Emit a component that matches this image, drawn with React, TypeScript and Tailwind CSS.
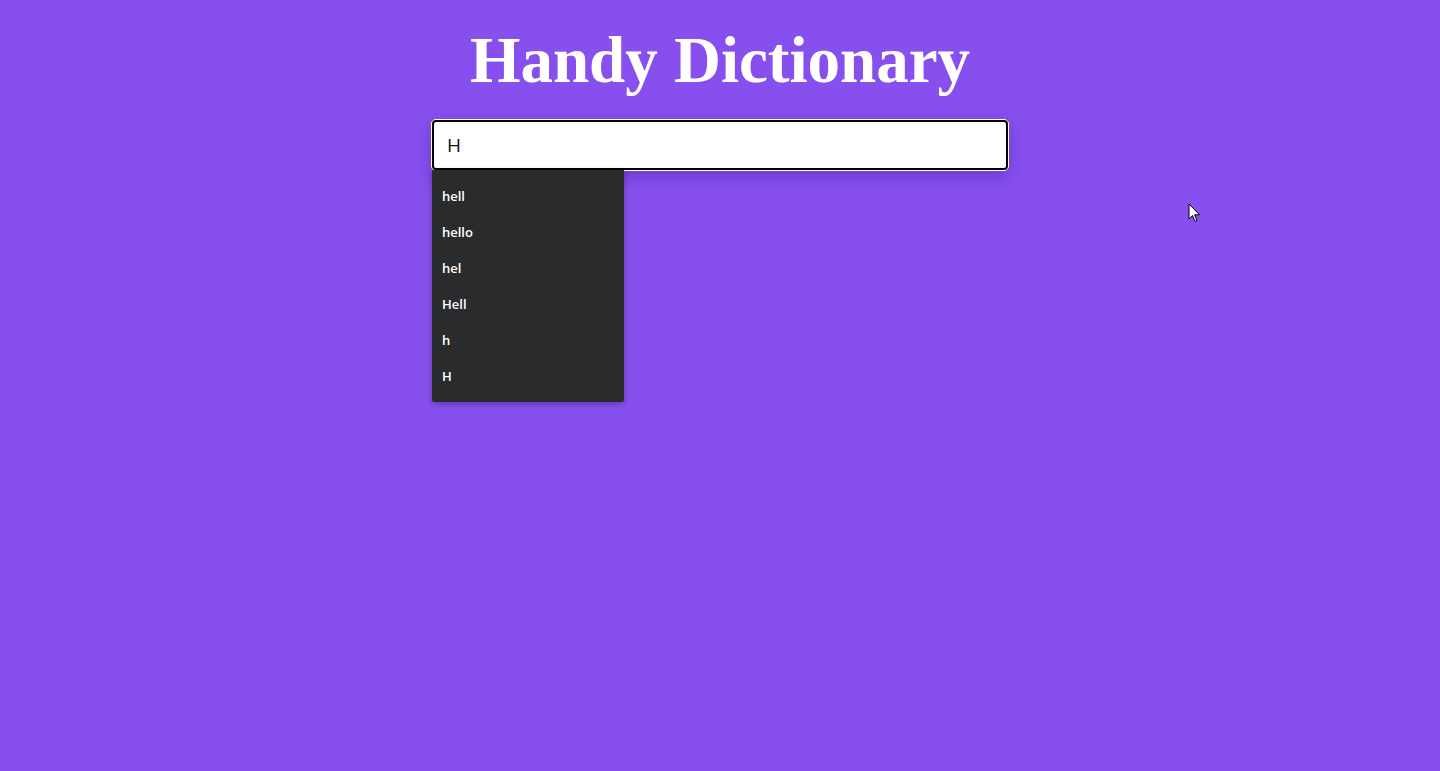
import React, { useState } from "react";

const suggestions = ["hell", "hello", "hel", "Hell", "h", "H"];

// Search box with autocomplete list
const SearchBox: React.FC = () => {
  const [query, setQuery] = useState("H");

  return (
    <div className="relative w-[578px]">
      <div className="rounded-[5px] border border-white bg-white shadow-[0_6px_16px_rgba(60,20,140,0.35)]">
        <input
          value={query}
          onChange={(e) => setQuery(e.target.value)}
          className="block h-[50px] w-full rounded-[4px] border-2 border-black bg-white px-[13px] text-[19px] text-[#111] outline-none"
          style={{ fontFamily: '"Open Sans", "Liberation Sans", sans-serif' }}
        />
      </div>
      <ul className="absolute left-[1px] top-[51px] w-[192px] rounded-b-[2px] bg-[#2a2b2d] pt-[9px] pb-[7px] shadow-[0_2px_6px_rgba(0,0,0,0.3)]">
        {suggestions.map((s) => (
          <li
            key={s}
            className="flex h-9 cursor-pointer items-center px-[10px] text-[13px] font-semibold text-white hover:bg-[#3a3b3d]"
          >
            {s}
          </li>
        ))}
      </ul>
    </div>
  );
};

export default function App() {
  return (
    <div
      className="relative flex min-h-[771px] flex-col items-center bg-[#8750ee] pt-[22px]"
      style={{ fontFamily: '"Open Sans", "Liberation Sans", sans-serif' }}
    >
      <h1
        className="mb-[21px] text-[65px] font-bold leading-[76px] text-white"
        style={{ fontFamily: '"Liberation Serif", serif' }}
      >
        Handy Dictionary
      </h1>
      <SearchBox />
      {/* mouse pointer */}
      <svg
        className="absolute left-[1188px] top-[203px]"
        width="14"
        height="20"
        viewBox="0 0 14 20"
      >
        <path
          d="M1 1 L1 16 L4.5 12.5 L7 18.5 L9 17.6 L6.6 11.8 L11.5 11.8 Z"
          fill="#fff"
          stroke="#000"
          strokeWidth="1"
          strokeLinejoin="round"
        />
      </svg>
    </div>
  );
}
